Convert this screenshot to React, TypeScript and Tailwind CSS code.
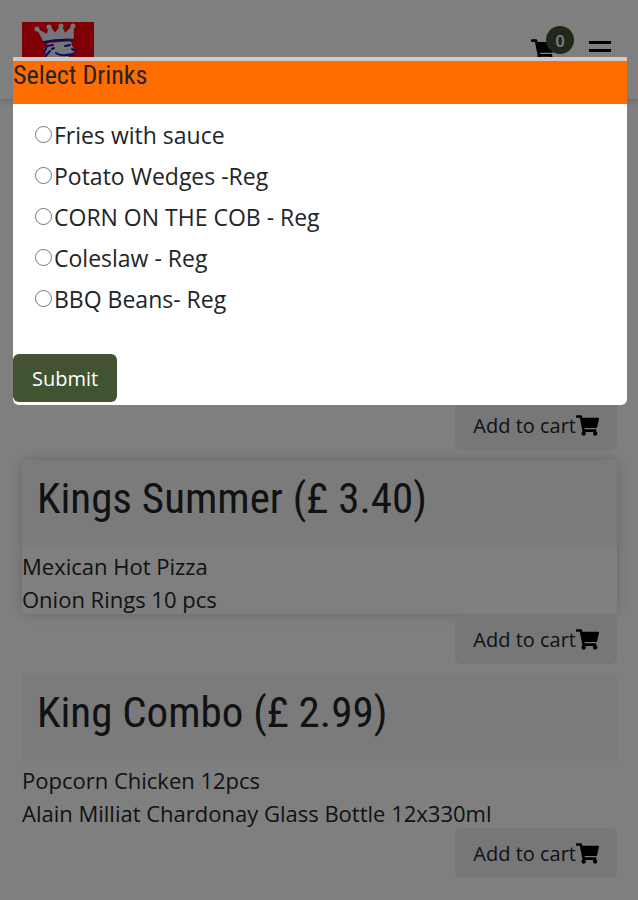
import { useState } from "react";
import { FaShoppingCart } from "react-icons/fa";

const condensed = "font-['Roboto_Condensed','Roboto',sans-serif]";

const drinks = [
  "Fries with sauce",
  "Potato Wedges -Reg",
  "CORN ON THE COB - Reg",
  "Coleslaw - Reg",
  "BBQ Beans- Reg",
];

const deals = [
  { name: "Kings Summer", price: "3.40", items: ["Mexican Hot Pizza", "Onion Rings 10 pcs"], raised: true },
  {
    name: "King Combo",
    price: "2.99",
    items: ["Popcorn Chicken 12pcs", "Alain Milliat Chardonay Glass Bottle 12x330ml"],
    raised: false,
  },
];

function Logo() {
  return (
    <svg viewBox="0 0 72 60" className="h-[60px] w-[72px]" aria-hidden="true">
      <rect width="72" height="60" fill="#ff0008" />
      <g fill="#e9ebf4">
        <path
          d="M22 19 L16 8 L25 13 L28 5 L33 12 L39 4 L43 12 L51 4 L51 16 Q36 15 22 19Z"
          stroke="#e9ebf4"
          strokeWidth="1.5"
          strokeLinejoin="round"
        />
        <circle cx="15" cy="7" r="2.500" />
        <circle cx="27" cy="5" r="2.500" />
        <circle cx="39" cy="4" r="2.500" />
        <circle cx="51" cy="4" r="2.500" />
        <path d="M26 21 L49 19 L50 24 L54 29 L50 31 L43 32 L50 37 L46 44 L25 44 L20 36 L24 32 L22 27Z" />
      </g>
      <path
        d="M22 20 Q36 17 50 18.500 M23 29 L25 24 L31 23 M22 36 L28 29 M30 27 L32 26 M34 31 Q38 34 44 33 L51 33 M43 24 L48 23 M50 27 L54 29"
        fill="none"
        stroke="#1717c0"
        strokeWidth="2"
        strokeLinecap="round"
      />
    </svg>
  );
}

function AddToCart() {
  return (
    <button
      type="button"
      className="flex h-[50px] items-center self-end rounded-md bg-[#efefef] px-[18px] pt-0.5 text-xl text-[#212529]"
    >
      Add to cart
      <FaShoppingCart className="mb-0.5 size-[23px] text-black" aria-hidden="true" />
    </button>
  );
}

export default function App() {
  const [choice, setChoice] = useState("");

  return (
    <div className="relative min-h-screen overflow-hidden bg-white font-['Open_Sans',sans-serif]">
      <header className="flex h-[99px] items-start justify-between pt-[22px] pr-[27px] pl-[22px] shadow-[0_1px_8px_rgba(0,0,0,0.25)]">
        <Logo />
        <div className="flex items-start gap-3 pt-1">
          <button type="button" aria-label="Cart" className="relative mt-3 mr-[22px]">
            <FaShoppingCart className="size-6 text-black" aria-hidden="true" />
            <span className="absolute -top-3 left-[15px] flex size-7 items-center justify-center rounded-full bg-[#415331] pt-0.5 text-base font-semibold text-white">
              0
            </span>
          </button>
          <button type="button" aria-label="Menu" className="mt-[15px] flex w-[22px] flex-col gap-[5px]">
            <span className="h-[3px] bg-black" />
            <span className="h-[3px] bg-black" />
            <span className="h-[3px] bg-black" />
          </button>
        </div>
      </header>

      <main className="flex flex-col gap-2.5 pr-[21px] pb-6 pl-[22px]">
        <section className="flex min-h-[351px] flex-col justify-end">
          <AddToCart />
        </section>
        {deals.map((deal) => (
          <section key={deal.name} className="flex flex-col">
            <div className={deal.raised ? "shadow-[0_0_12px_rgba(0,0,0,0.2)]" : ""}>
              <h2 className={`h-[87px] bg-[#f7f7f7] px-[15px] pt-3 text-[43px] leading-[52px] text-[#212529] ${condensed}`}>
                {deal.name} (£ {deal.price})
              </h2>
              <ul className="h-[67px] pt-[3px] text-[22px] leading-[33px] text-[#212529]">
                {deal.items.map((item) => (
                  <li key={item}>{item}</li>
                ))}
              </ul>
            </div>
            <AddToCart />
          </section>
        ))}
      </main>

      <div className="absolute inset-0 bg-black/50 pt-[57px] pr-[11px] pl-[13px]">
        <form
          role="dialog"
          aria-label="Select Drinks"
          onSubmit={(event) => event.preventDefault()}
          className="overflow-hidden rounded-b-md border-t-4 border-[#d0c9c6] bg-white pb-[3px]"
        >
          <h1 className={`h-[43px] bg-[#ff6d00] text-[26px] leading-7 text-[#212529] ${condensed}`}>Select Drinks</h1>
          <div className="flex flex-col px-[22px] pt-[11px] pb-[34px]">
            {drinks.map((drink) => (
              <label key={drink} className="flex h-[41px] items-center gap-0.5 text-[23px] text-[#212529]">
                <input
                  type="radio"
                  name="drink"
                  value={drink}
                  checked={choice === drink}
                  onChange={() => setChoice(drink)}
                  className="mb-0.5 size-[17px] appearance-none rounded-full border border-[#767676] bg-white checked:border-[5px]"
                />
                {drink}
              </label>
            ))}
          </div>
          <button type="submit" className="h-12 rounded-md bg-[#415331] px-[19px] pt-0.5 text-xl font-medium text-white">
            Submit
          </button>
        </form>
      </div>
    </div>
  );
}
